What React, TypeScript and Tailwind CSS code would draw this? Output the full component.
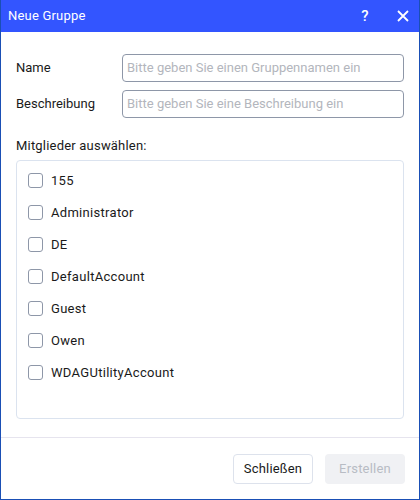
import React from "react";

const users = ["155", "Administrator", "DE", "DefaultAccount", "Guest", "Owen", "WDAGUtilityAccount"];

export default function App() {
  return (
    <div className="w-[420px] h-[500px] flex flex-col bg-white border border-t-0 border-[#1a4fb5] text-[13px] text-[#1a1a1a]" style={{ fontFamily: "Roboto, 'Noto Sans', sans-serif" }}>
      <div className="h-[32px] shrink-0 bg-[#3355ff] flex items-center pl-[7px] pr-[1px] text-white">
        <span className="text-[13px] tracking-[0.2px]">Neue Gruppe</span>
        <div className="ml-auto flex items-center">
          <span className="w-[30px] text-center text-[15px] font-medium">?</span>
          <svg width="30" height="14" viewBox="0 0 30 14" className="ml-[8px]">
            <path d="M10 2 L20 12 M20 2 L10 12" stroke="white" strokeWidth="1.8" />
          </svg>
        </div>
      </div>
      <div className="flex-1 flex flex-col px-[15px] pt-[22px]">
        <div className="flex items-center h-[28px]">
          <span className="w-[106px]">Name</span>
          <div className="flex-1 h-[28px] border border-[#8e97a8] rounded-[4px] flex items-center px-[4px] text-[#b3b6bd]">Bitte geben Sie einen Gruppennamen ein</div>
        </div>
        <div className="flex items-center h-[28px] mt-[8px]">
          <span className="w-[106px]">Beschreibung</span>
          <div className="flex-1 h-[28px] border border-[#8e97a8] rounded-[4px] flex items-center px-[4px] text-[#b3b6bd]">Bitte geben Sie eine Beschreibung ein</div>
        </div>
        <div className="mt-[18px] tracking-[0.2px]">Mitglieder auswählen:</div>
        <div className="mt-[4px] h-[259px] border border-[#dbe3ef] rounded-[4px] flex flex-col pt-[4px] pl-[11px]">
          {users.map((u) => (
            <div key={u} className="flex items-center h-[32px]">
              <span className="w-[15px] h-[15px] border border-[#8e97a8] rounded-[3px] bg-white" />
              <span className="ml-[8px] tracking-[0.3px]">{u}</span>
            </div>
          ))}
        </div>
      </div>
      <div className="h-[62px] shrink-0 border-t border-[#e6e4ee] flex items-center justify-end gap-[12px] pr-[14px]">
        <button className="w-[80px] h-[30px] border border-[#dde2ec] rounded-[4px] bg-white text-[#1a1a1a] tracking-[0.2px]">Schließen</button>
        <button className="w-[80px] h-[30px] rounded-[4px] bg-[#f0f1f4] text-[#b8bcc4] tracking-[0.2px]">Erstellen</button>
      </div>
    </div>
  );
}
